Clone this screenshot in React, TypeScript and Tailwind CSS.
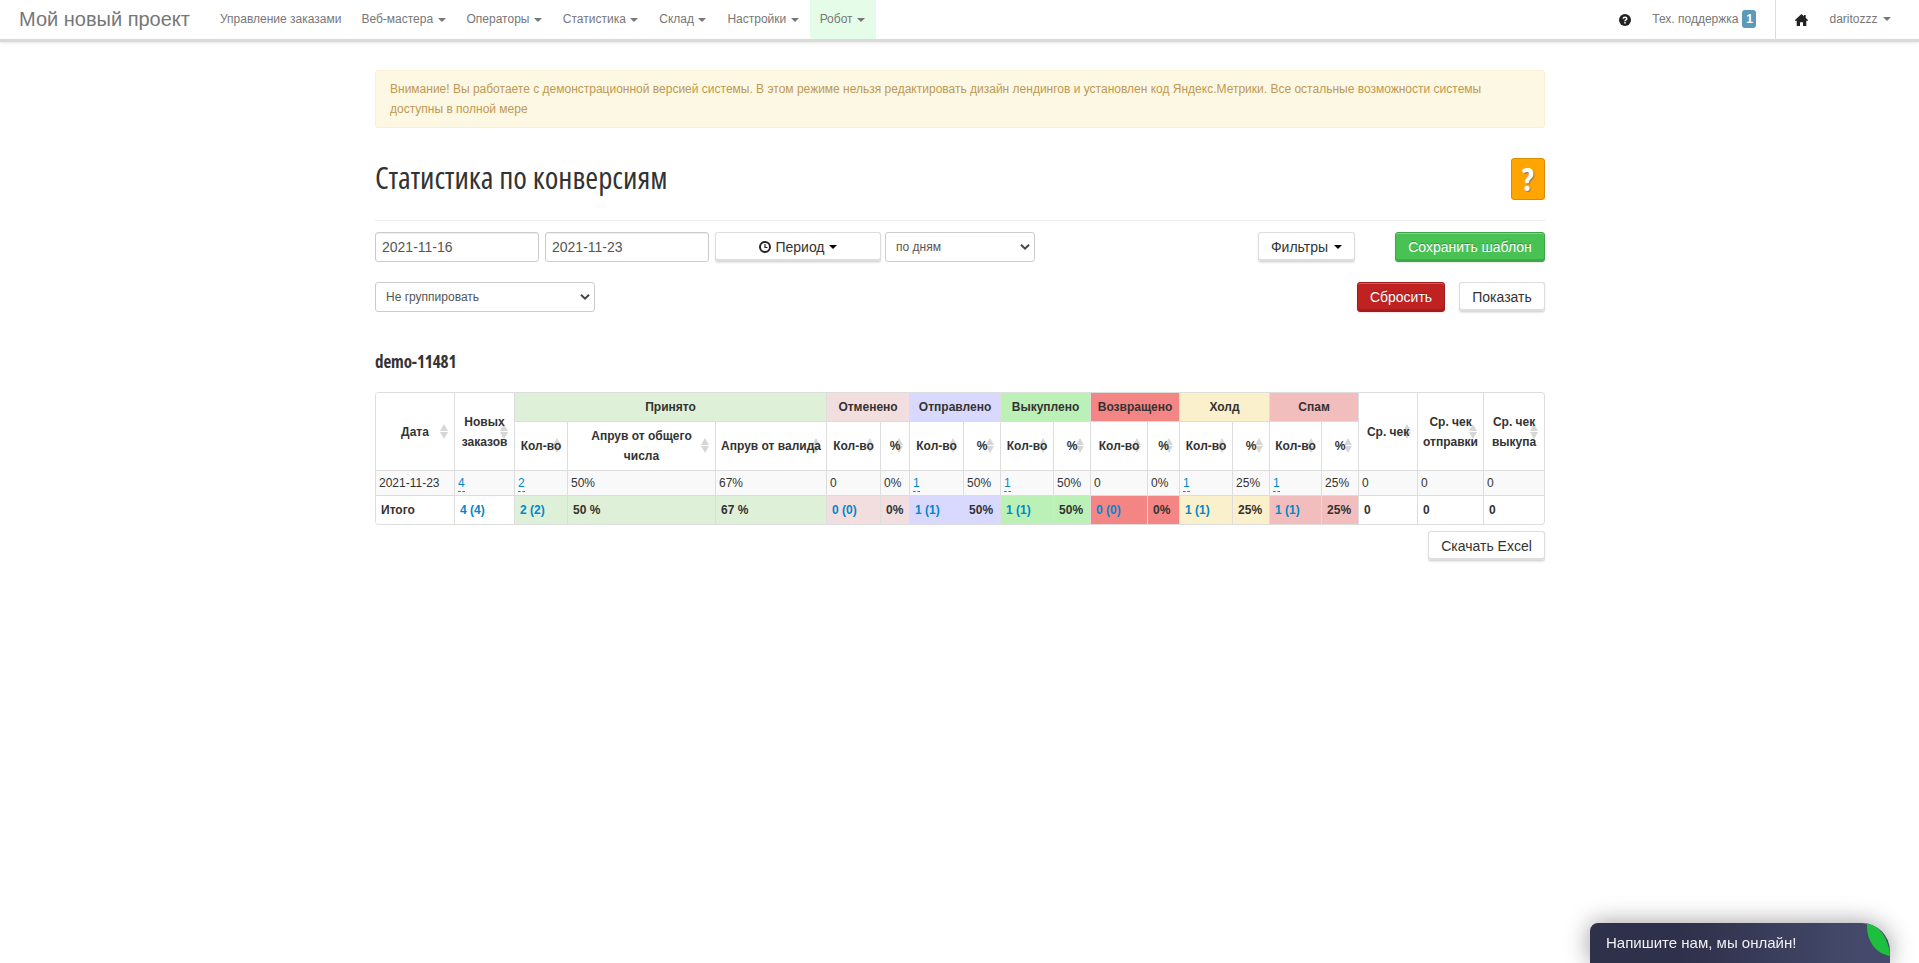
import type { ReactNode } from 'react';
import clsx from 'clsx';

interface Group {
  title: string;
  bg: string;
  count: number;
  percent: string;
}

const menu = [
  { label: 'Управление заказами' },
  { label: 'Веб-мастера', caret: true },
  { label: 'Операторы', caret: true },
  { label: 'Статистика', caret: true },
  { label: 'Склад', caret: true },
  { label: 'Настройки', caret: true },
  { label: 'Робот', caret: true, active: true },
];

const groups: Group[] = [
  { title: 'Отменено', bg: 'bg-[#f2dede]', count: 0, percent: '0%' },
  { title: 'Отправлено', bg: 'bg-[#d9d9ff]', count: 1, percent: '50%' },
  { title: 'Выкуплено', bg: 'bg-[#bbf0b7]', count: 1, percent: '50%' },
  { title: 'Возвращено', bg: 'bg-[#f38585]', count: 0, percent: '0%' },
  { title: 'Холд', bg: 'bg-[#faf0cb]', count: 1, percent: '25%' },
  { title: 'Спам', bg: 'bg-[#f2bdbd]', count: 1, percent: '25%' },
];

const columnWidths = [79, 60, 53, 148, 111, 54, 29, 54, 37, 53, 37, 57, 32, 53, 37, 52, 37, 59, 66, 61];

const Caret = ({ className }: { className?: string }) => (
  <span
    className={clsx('inline-block h-0 w-0 border-x-4 border-t-4 border-x-transparent align-middle', className)}
  />
);

const SortIcon = () => (
  <svg className="absolute top-1/2 right-[6px] -z-10 -mt-2 h-[15px] w-2" viewBox="0 0 8 15" fill="#d6d6d6">
    <path d="M4 0 8 7H0zM4 15 0 8h8z" />
  </svg>
);

const Button = ({ className, children }: { className?: string; children: ReactNode }) => (
  <button
    className={clsx(
      'flex h-[30px] items-center justify-center rounded-[3px] border border-[#ddd] border-b-[#d9d9d9] bg-white text-sm text-[#333] shadow-[inset_0_-2px_0_#dedede,0_1px_2px_rgba(0,0,0,0.1)]',
      className
    )}
  >
    {children}
  </button>
);

const Select = ({ className, children }: { className?: string; children: ReactNode }) => (
  <div
    className={clsx(
      'flex h-[30px] items-center justify-between rounded-[3px] border border-[#ccc] bg-white pr-1 pl-2.5 text-xs text-[#555]',
      className
    )}
  >
    {children}
    <svg className="h-2 w-2.5" viewBox="0 0 10 8" fill="none" stroke="#444" strokeWidth="2">
      <path d="M1 1.7 5 5.7 9 1.7" />
    </svg>
  </div>
);

const DateInput = ({ value }: { value: string }) => (
  <input
    readOnly
    value={value}
    className="h-[30px] w-[164px] rounded-[3px] border border-[#ccc] px-1.5 text-sm text-[#555] shadow-[inset_0_1px_1px_rgba(0,0,0,0.075)]"
  />
);

const Head = ({ children, rowSpan }: { children: ReactNode; rowSpan?: number }) => (
  <th
    rowSpan={rowSpan}
    className={clsx('relative z-0 border-l border-[#ddd] p-0 text-center font-bold', !rowSpan && 'border-t')}
  >
    {children}
    <SortIcon />
  </th>
);

const Cell = ({ children, link }: { children: ReactNode; link?: boolean }) => (
  <td className="border-t border-l border-[#ddd] bg-[#f9f9f9] py-0 pr-0 pl-[3px]">
    {link ? (
      <a className="inline-block h-[18px] border-b border-dashed border-[#08c] leading-[18px] text-[#08c]">{children}</a>
    ) : (
      children
    )}
  </td>
);

const Total = ({ children, bg, link }: { children: ReactNode; bg?: string; link?: boolean }) => (
  <td className={clsx('border-t border-l border-[#ddd] py-0 pr-0 pl-[5px] font-bold', bg, link && 'text-[#08c]')}>
    {children}
  </td>
);

const Navbar = () => (
  <nav className="flex h-[42px] items-stretch border-b-[3px] border-[#dadada] text-xs text-[#777] shadow-[0_1px_3px_rgba(0,0,0,0.1)]">
    <a className="flex w-[210px] items-center pb-0.5 pl-[19px] text-xl">Мой новый проект</a>
    {menu.map((item) => (
      <a key={item.label} className={clsx('flex items-center px-2.5 pb-0.5', item.active && 'bg-[#e5fde8]')}>
        {item.label}
        {item.caret && <Caret className="mt-0.5 mr-px ml-[4.4px]" />}
      </a>
    ))}
    <div className="ml-auto flex items-stretch">
      <span className="flex items-center pt-px pr-[21px]">
        <svg className="h-3 w-3" viewBox="0 0 12 12">
          <circle cx="6" cy="6" r="6" fill="#222" />
          <path d="M4.2 4.7C4.2 2.6 7.8 2.6 7.8 4.7 7.8 6 6 5.9 6 7.3M6 8.1v1.5" fill="none" stroke="#fff" strokeWidth="1.5" />
        </svg>
      </span>
      <a className="flex items-center pb-0.5">
        Тех. поддержка
        <span className="ml-1 flex h-[18px] w-3.5 items-center justify-center rounded-[3px] bg-[#5b9bba] font-bold text-white">
          1
        </span>
      </a>
      <span className="ml-[19px] flex items-center border-l border-[#ddd] pt-px pl-[19px]">
        <svg className="h-3 w-[13px]" viewBox="0 0 13 12" fill="#222">
          <path d="M6.5 0 9 2.3V1h1.7v2.9L13 6v.8h-1.7V12H8V8.300H5V12H1.700V6.800H0V6z" />
        </svg>
      </span>
      <a className="flex items-center pr-7 pb-0.5 pl-[21px]">
        daritozzz
        <Caret className="mt-px ml-[5.5px]" />
      </a>
    </div>
  </nav>
);

const StatsTable = () => (
  <table className="h-[133px] w-[1170px] table-fixed border-separate border-spacing-0 overflow-hidden rounded border border-l-0 border-[#ddd] text-xs leading-5 text-[#333]">
    <colgroup>
      {columnWidths.map((width, i) => (
        <col key={i} style={{ width }} />
      ))}
    </colgroup>
    <thead>
      <tr className="h-7">
        <Head rowSpan={2}>Дата</Head>
        <Head rowSpan={2}>Новых заказов</Head>
        <th colSpan={3} className="border-l border-[#ddd] bg-[#dff0d8] p-0">
          Принято
        </th>
        {groups.map((g) => (
          <th key={g.title} colSpan={2} className={clsx('border-l border-[#ddd] p-0', g.bg)}>
            {g.title}
          </th>
        ))}
        <Head rowSpan={2}>Ср. чек</Head>
        <Head rowSpan={2}>Ср. чек отправки</Head>
        <Head rowSpan={2}>
          Ср. чек
          <br />
          выкупа
        </Head>
      </tr>
      <tr className="h-[49px]">
        <Head>Кол-во</Head>
        <Head>
          Апрув от общего
          <br />
          числа
        </Head>
        <Head>Апрув от валида</Head>
        {groups.flatMap((g) => [<Head key={g.title}>Кол-во</Head>, <Head key={`${g.title}%`}>%</Head>])}
      </tr>
    </thead>
    <tbody>
      <tr className="h-[25px]">
        <Cell>2021-11-23</Cell>
        <Cell link>4</Cell>
        <Cell link>2</Cell>
        <Cell>50%</Cell>
        <Cell>67%</Cell>
        {groups.flatMap((g) => [
          <Cell key={g.title} link={g.count > 0}>
            {g.count}
          </Cell>,
          <Cell key={`${g.title}%`}>{g.percent}</Cell>,
        ])}
        <Cell>0</Cell>
        <Cell>0</Cell>
        <Cell>0</Cell>
      </tr>
      <tr className="h-[29px]">
        <Total>Итого</Total>
        <Total link>4 (4)</Total>
        <Total link bg="bg-[#dff0d8]">
          2 (2)
        </Total>
        <Total bg="bg-[#dff0d8]">50 %</Total>
        <Total bg="bg-[#dff0d8]">67 %</Total>
        {groups.flatMap((g) => [
          <Total key={g.title} link bg={g.bg}>
            {`${g.count} (${g.count})`}
          </Total>,
          <Total key={`${g.title}%`} bg={g.bg}>
            {g.percent}
          </Total>,
        ])}
        <Total>0</Total>
        <Total>0</Total>
        <Total>0</Total>
      </tr>
    </tbody>
  </table>
);

const ChatWidget = () => (
  <div className="fixed right-[29px] bottom-0 flex h-10 w-[300px] items-start overflow-hidden rounded-tl-lg rounded-tr-[28px] bg-linear-to-r from-[#2f304a] from-30% to-[#454a6c] to-90% pt-2.5 pl-4 text-[15px] leading-5 text-[#f0f0f4] shadow-[0_0_24px_rgba(0,0,0,0.4)]">
    Напишите нам, мы онлайн!
    <svg className="absolute top-0 right-0 h-[33px] w-[23px]" viewBox="0 0 23 33" fill="#1cbf3e">
      <path d="M0 0C13 2 22 17 23 33 9 31-1 18 0 0z" />
    </svg>
  </div>
);

export default function App() {
  return (
    <div className="min-h-screen bg-white font-['Liberation_Sans',Arial,sans-serif] text-[#333]">
      <Navbar />
      <main className="ml-[375px] w-[1170px] pt-7">
        <div className="h-[58px] rounded-[3px] border border-[#fbeed5] bg-[#fcf8e3] px-3.5 py-2 text-xs leading-5 text-[#c09853]">
          Внимание! Вы работаете с демонстрационной версией системы. В этом режиме нельзя редактировать дизайн лендингов
          и установлен код Яндекс.Метрики. Все остальные возможности системы доступны в полной мере
        </div>

        <div className="mt-[30px] flex h-[63px] items-start justify-between border-b border-[#eee]">
          <h1 className="font-['Open_Sans',sans-serif] text-[31px] leading-[38px] font-stretch-75%">
            Статистика по конверсиям
          </h1>
          <button className="flex h-[42px] w-[34px] items-center justify-center rounded-[3px] border border-[#d98c00] bg-[#ffa500] font-['Open_Sans',sans-serif] text-[32px] font-bold text-white font-stretch-75% [text-shadow:1px_1px_1px_#777]">
            ?
          </button>
        </div>

        <div className="mt-[11px] flex">
          <DateInput value="2021-11-16" />
          <div className="w-1.5" />
          <DateInput value="2021-11-23" />
          <Button className="ml-1.5 w-[166px]">
            <svg className="mr-1 h-3 w-3" viewBox="0 0 12 12" fill="none" stroke="#222">
              <circle cx="6" cy="6" r="5" strokeWidth="2" />
              <path d="M6 3v3.500h2.500" strokeWidth="1.200" />
            </svg>
            Период
            <Caret className="ml-1 border-t-black" />
          </Button>
          <Select className="ml-1 w-[150px]">по дням</Select>
          <Button className="ml-auto w-[97px]">
            Фильтры
            <Caret className="ml-1.5 border-t-black" />
          </Button>
          <Button className="ml-10 w-[150px] border-[#3fa348]! bg-[#49c254]! text-white! shadow-[inset_0_1px_0_#7fd587,inset_0_-2px_0_#3fa94a,0_1px_2px_rgba(0,0,0,0.1)]! [text-shadow:0_-1px_0_rgba(0,0,0,0.25)]">
            Сохранить шаблон
          </Button>
        </div>

        <div className="mt-5 flex">
          <Select className="w-[220px]">Не группировать</Select>
          <Button className="ml-auto w-[88px] border-[#a01c1c]! bg-[#c02222]! text-white! shadow-[inset_0_1px_0_#d46060,inset_0_-2px_0_#a71d1d,0_1px_2px_rgba(0,0,0,0.1)]! [text-shadow:0_-1px_0_rgba(0,0,0,0.25)]">
            Сбросить
          </Button>
          <Button className="ml-3.5 w-[86px]">Показать</Button>
        </div>

        <h4 className="mt-10 mb-5 font-['Open_Sans',sans-serif] text-[17px] leading-5 font-bold tracking-[-0.1px] font-stretch-75%">
          demo-11481
        </h4>

        <StatsTable />

        <div className="mt-1.5 flex justify-end">
          <Button className="w-[117px]">Скачать Excel</Button>
        </div>
      </main>
      <ChatWidget />
    </div>
  );
}
